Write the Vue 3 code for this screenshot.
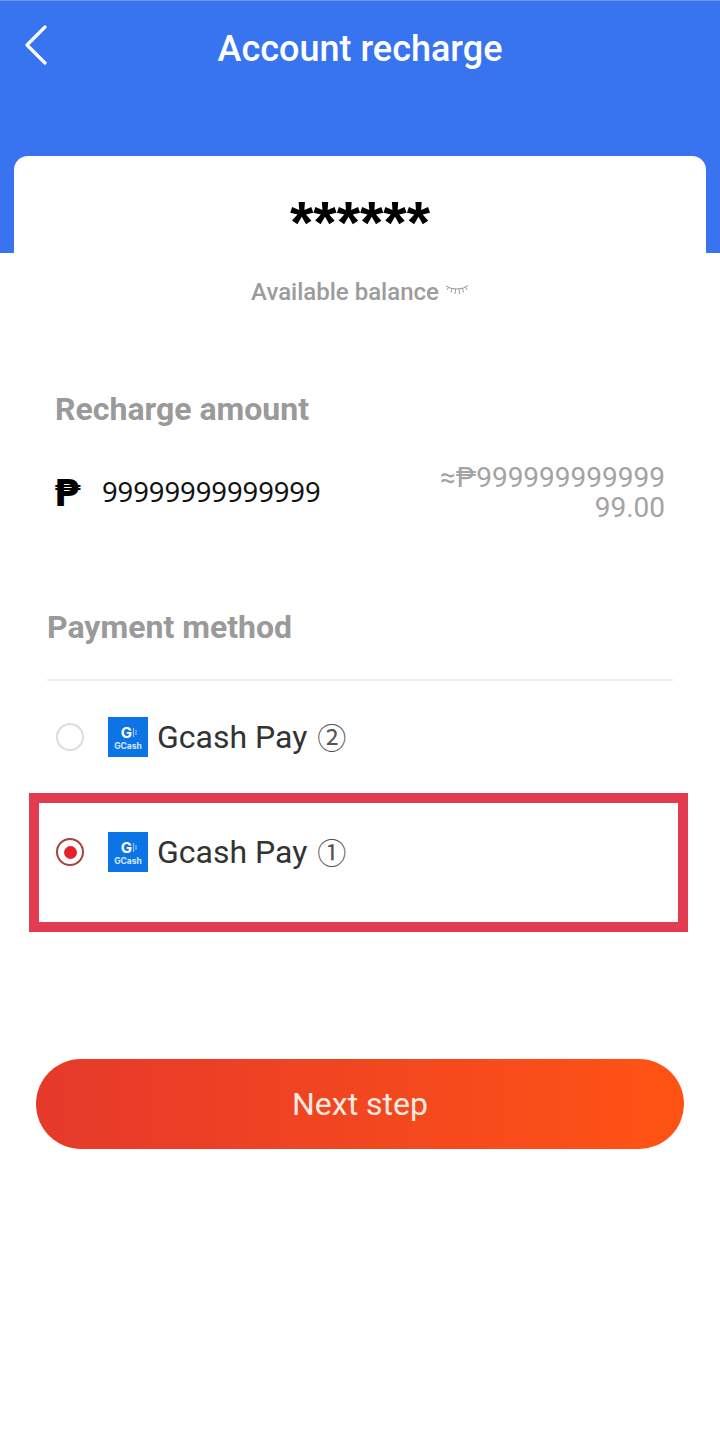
<script setup>
const methods = [
  { id: 2, label: 'Gcash Pay', mark: '②', selected: false },
  { id: 1, label: 'Gcash Pay', mark: '①', selected: true }
]
</script>

<template>
  <div class="page">
    <header class="hero">
      <div class="nav">
        <svg class="back" viewBox="0 0 24 40" width="24" height="40">
          <path d="M21 2 L3 20 L21 38" fill="none" stroke="#fff" stroke-width="3.2" stroke-linecap="round" stroke-linejoin="round" />
        </svg>
        <h1 class="title">Account recharge</h1>
      </div>
      <div class="card"><span class="stars">******</span></div>
    </header>

    <div class="balance">
      <span>Available balance</span>
      <svg class="eye" viewBox="0 0 24 12" width="24" height="12">
        <path d="M1 2 Q5 5 12 5 Q19 5 23 1.5 M3.5 3.5 L2 6 M7 4.6 L6 8.5 M10.5 5 L10 10 M14 5 L14.5 10 M17.5 4.4 L18.5 8.5 M20.5 3.2 L22.5 6" fill="none" stroke="#8f8f8f" stroke-width="0.9" />
      </svg>
    </div>

    <section class="amount">
      <h2 class="label">Recharge amount</h2>
      <div class="amount-row">
        <span class="peso">₱</span>
        <span class="value">99999999999999</span>
        <span class="converted">≈₱99999999999999.00</span>
      </div>
    </section>

    <section class="payment">
      <h2 class="label">Payment method</h2>
      <div class="divider"></div>
      <div v-for="m in methods" :key="m.id" class="method" :class="{ active: m.selected }">
        <span class="radio"><i v-if="m.selected" class="dot"></i></span>
        <span class="logo">
          <svg viewBox="0 0 40 40" width="40" height="40">
            <rect width="40" height="40" fill="#0d74e6" />
            <text x="18.5" y="21" class="logo-g" text-anchor="middle">G</text>
            <path d="M25.5 11 v9 M28 13 v5" stroke="#8fc2f8" stroke-width="1.2" fill="none" />
            <text x="20" y="32" class="logo-t" text-anchor="middle">GCash</text>
          </svg>
        </span>
        <span class="method-name">{{ m.label }}</span>
        <span class="mark">{{ m.mark }}</span>
      </div>
    </section>

    <button class="next" type="button">Next step</button>
  </div>
</template>

<style scoped>
.page {
  width: 720px;
  height: 1447px;
  background: #fff;
  font-family: Roboto, "Noto Sans", sans-serif;
  overflow: hidden;
}
.hero {
  height: 253px;
  box-sizing: border-box;
  background: #3874f0;
  border-top: 1px solid #6a97ee;
  display: flex;
  flex-direction: column;
}
.nav {
  height: 156px;
  position: relative;
  display: flex;
  justify-content: center;
}
.back {
  position: absolute;
  left: 24px;
  top: 24px;
}
.title {
  margin: 28px 0 0;
  font-size: 36px;
  line-height: 40px;
  font-weight: 500;
  color: #fff;
}
.card {
  flex: 1;
  margin: 0 14px;
  background: #fff;
  border-radius: 14px 14px 0 0;
  display: flex;
  justify-content: center;
  padding-top: 37px;
}
.stars {
  font-family: "Liberation Sans", sans-serif;
  font-size: 60px;
  line-height: 60px;
  font-weight: 700;
  color: #000;
}
.balance {
  height: 30px;
  margin-top: 24px;
  display: flex;
  justify-content: center;
  align-items: center;
  gap: 6px;
  font-size: 24px;
  font-weight: 500;
  color: #9c9c9c;
}
.eye {
  margin-bottom: 4px;
}
.label {
  margin: 0;
  font-size: 32px;
  line-height: 36px;
  font-weight: 700;
  color: #9a9a9a;
}
.amount {
  margin-top: 84px;
  padding: 0 55px;
}
.amount-row {
  margin-top: 36px;
  display: flex;
  align-items: center;
}
.peso {
  width: 47px;
  font-family: "DejaVu Sans", sans-serif;
  font-size: 38px;
  font-weight: 700;
  color: #000;
  text-indent: -1px;
}
.value {
  font-family: "Noto Sans", sans-serif;
  font-size: 27.3px;
  padding-bottom: 4px;
  color: #111;
}
.converted {
  margin-left: auto;
  width: 228px;
  text-align: right;
  font-size: 28px;
  line-height: 30px;
  color: #a3a3a3;
  word-break: break-all;
}
.payment {
  margin-top: 86px;
  padding: 0 47px;
  display: flex;
  flex-direction: column;
}
.divider {
  height: 2px;
  margin-top: 34px;
  width: 626px;
  background: #eeeeee;
}
.method {
  display: flex;
  height: 112px;
  margin: 0 -18px;
  padding: 36px 0 0 27px;
  box-sizing: border-box;
  align-items: flex-start;
}
.method.active {
  width: 659px;
  height: 139px;
  border: 10px solid #e23b52;
  padding: 29px 0 0 17px;
}
.radio {
  width: 28px;
  height: 28px;
  margin-top: 6px;
  box-sizing: border-box;
  border: 2px solid #dcdcdc;
  border-radius: 50%;
  display: flex;
  align-items: center;
  justify-content: center;
}
.active .radio {
  border: 2px solid #a8433f;
}
.dot {
  width: 13px;
  height: 13px;
  border-radius: 50%;
  background: #e5222a;
}
.logo {
  width: 40px;
  height: 40px;
  margin-left: 24px;
}
.logo svg {
  display: block;
}
.logo-g {
  font-family: Inter, Roboto, sans-serif;
  font-size: 15px;
  font-weight: 700;
  fill: #fff;
}
.logo-t {
  font-family: Inter, Roboto, sans-serif;
  font-size: 8.5px;
  font-weight: 700;
  fill: #d5e9ff;
}
.method-name {
  margin-left: 9px;
  font-size: 32px;
  line-height: 40px;
  color: #333;
}
.mark {
  margin-left: 10px;
  margin-top: -1px;
  font-family: "Noto Sans CJK SC", sans-serif;
  font-size: 29px;
  line-height: 40px;
  color: #555;
}
.next {
  display: block;
  width: 648px;
  height: 90px;
  margin: 127px 0 0 36px;
  border: none;
  border-radius: 45px;
  background: linear-gradient(90deg, #e5392c, #ff5314);
  font-family: Roboto, sans-serif;
  font-size: 32px;
  color: #f7ebe0;
}
</style>
